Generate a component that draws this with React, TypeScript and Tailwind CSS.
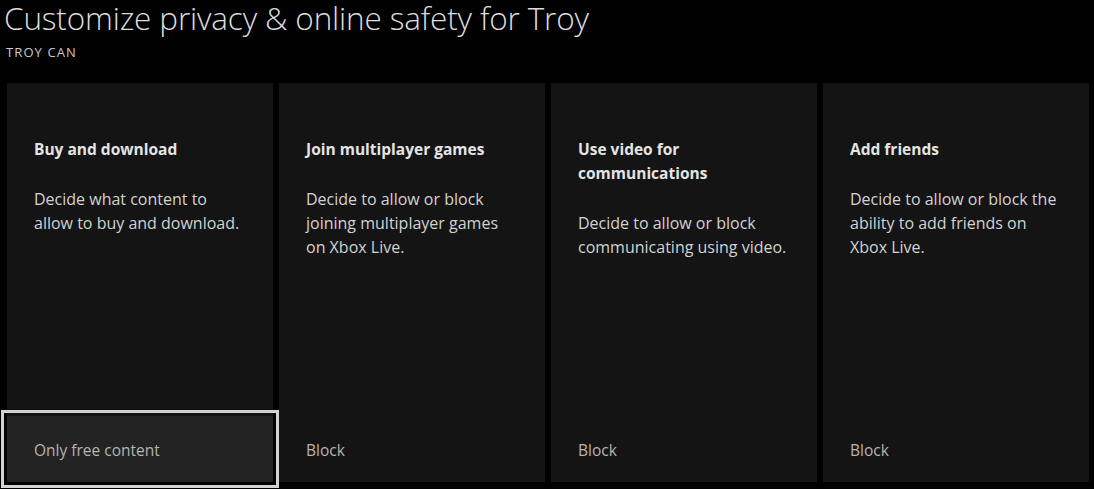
import React from 'react';

const SETTINGS = [
  {
    id: 'buy',
    title: 'Buy and download',
    desc: 'Decide what content to allow to buy and download.',
    value: 'Only free content',
    focused: true,
  },
  {
    id: 'multiplayer',
    title: 'Join multiplayer games',
    desc: 'Decide to allow or block joining multiplayer games on Xbox Live.',
    value: 'Block',
  },
  {
    id: 'video',
    title: 'Use video for communications',
    desc: 'Decide to allow or block communicating using video.',
    value: 'Block',
  },
  {
    id: 'friends',
    title: 'Add friends',
    desc: 'Decide to allow or block the ability to add friends on Xbox Live.',
    value: 'Block',
  },
];

const App: React.FC = () => {
  return (
    <div
      className="w-[1094px] h-[489px] bg-black overflow-hidden flex flex-col"
      style={{ fontFamily: '"Open Sans", "Noto Sans", sans-serif' }}
    >
      {/* Header */}
      <div className="pl-[4px]">
        <h1 className="text-[31.5px] leading-[35px] font-light text-[#dcdcdc] tracking-[-0.15px]">
          Customize privacy &amp; online safety for Troy
        </h1>
        <p className="mt-[9px] pl-[2px] text-[13px] leading-[16px] tracking-[1.1px] text-[#c8c8c8]">TROY CAN</p>
      </div>

      {/* Setting tiles */}
      <div className="mt-[23px] pl-[7px] grid grid-cols-[repeat(4,266px)] gap-[6px]">
        {SETTINGS.map(s => (
          <div key={s.id} className="h-[399px] bg-[#141414] flex flex-col">
            <div className="pl-[27px] pr-[29px] pt-[54px]">
              <h3 className="text-[15.5px] leading-[24px] font-bold text-[#e4e4e4]">{s.title}</h3>
              <p className="mt-[26px] text-[16px] leading-[24px] text-[#d2d2d2]">{s.desc}</p>
            </div>
            <button
              className={
                s.focused
                  ? 'mt-auto h-[66px] w-full flex items-center pl-[27px] pr-[27px] pt-[3px] text-left text-[15.5px] text-[#b4b4b4] bg-[#232323] outline-solid outline-3 outline-offset-3 outline-[#d2d2d2]'
                  : 'mt-auto h-[66px] w-full flex items-center pl-[27px] pr-[27px] pt-[3px] text-left text-[15.5px] text-[#b4b4b4]'
              }
            >
              {s.value}
            </button>
          </div>
        ))}
      </div>
    </div>
  );
};

export default App;
